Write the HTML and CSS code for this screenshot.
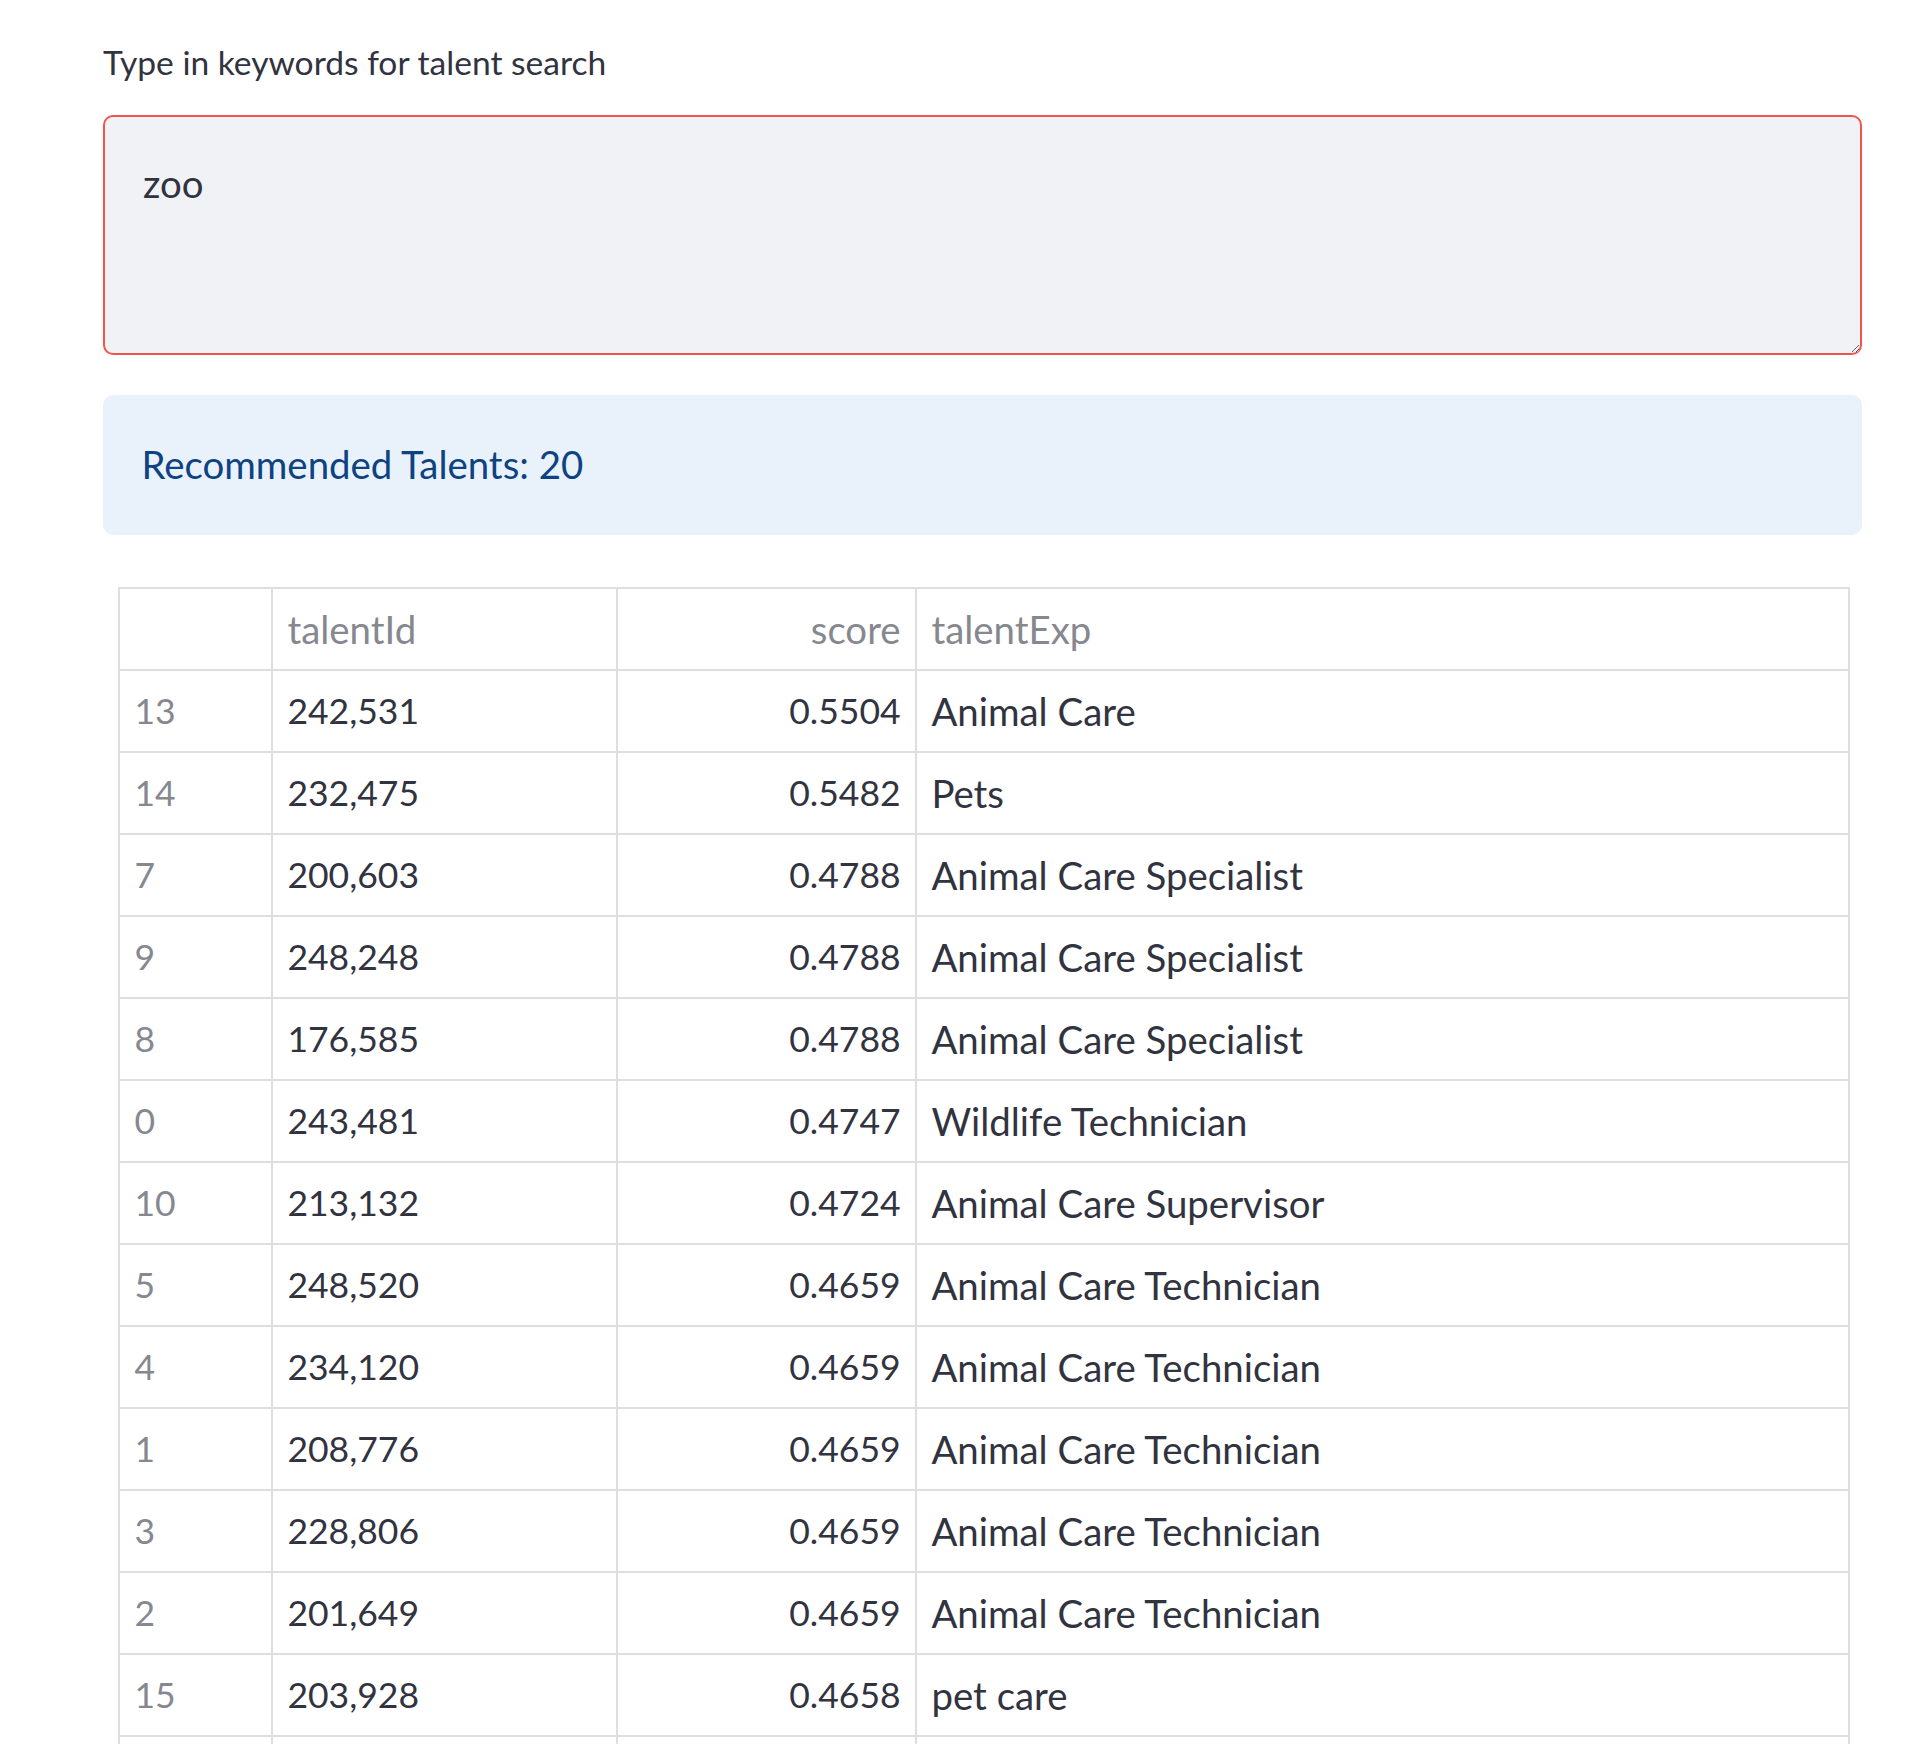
FILE: index.html
```html
<!DOCTYPE html>
<html lang="en">
<head>
<meta charset="utf-8">
<title>Talent search</title>
<link rel="stylesheet" href="styles.css">
</head>
<body>
<main class="main">
  <label class="field-label" for="kw">Type in keywords for talent search</label>
  <textarea id="kw" class="kw-input">zoo</textarea>
  <div class="info-box">Recommended Talents: 20</div>
  <div class="table-wrap">
    <table class="results">
      <colgroup>
        <col class="c-idx"><col class="c-id"><col class="c-score"><col class="c-exp">
      </colgroup>
      <thead>
        <tr><th></th><th class="left">talentId</th><th class="right">score</th><th class="left">talentExp</th></tr>
      </thead>
      <tbody>
        <tr><th class="num">13</th><td class="num">242,531</td><td class="num right">0.5504</td><td>Animal Care</td></tr>
        <tr><th class="num">14</th><td class="num">232,475</td><td class="num right">0.5482</td><td>Pets</td></tr>
        <tr><th class="num">7</th><td class="num">200,603</td><td class="num right">0.4788</td><td>Animal Care Specialist</td></tr>
        <tr><th class="num">9</th><td class="num">248,248</td><td class="num right">0.4788</td><td>Animal Care Specialist</td></tr>
        <tr><th class="num">8</th><td class="num">176,585</td><td class="num right">0.4788</td><td>Animal Care Specialist</td></tr>
        <tr><th class="num">0</th><td class="num">243,481</td><td class="num right">0.4747</td><td>Wildlife Technician</td></tr>
        <tr><th class="num">10</th><td class="num">213,132</td><td class="num right">0.4724</td><td>Animal Care Supervisor</td></tr>
        <tr><th class="num">5</th><td class="num">248,520</td><td class="num right">0.4659</td><td>Animal Care Technician</td></tr>
        <tr><th class="num">4</th><td class="num">234,120</td><td class="num right">0.4659</td><td>Animal Care Technician</td></tr>
        <tr><th class="num">1</th><td class="num">208,776</td><td class="num right">0.4659</td><td>Animal Care Technician</td></tr>
        <tr><th class="num">3</th><td class="num">228,806</td><td class="num right">0.4659</td><td>Animal Care Technician</td></tr>
        <tr><th class="num">2</th><td class="num">201,649</td><td class="num right">0.4659</td><td>Animal Care Technician</td></tr>
        <tr><th class="num">15</th><td class="num">203,928</td><td class="num right">0.4658</td><td>pet care</td></tr>
        <tr class="cut"><th></th><td></td><td></td><td></td></tr>
      </tbody>
    </table>
  </div>
</main>
</body>
</html>
```
FILE: styles.css
```css
html, body {
  margin: 0;
  padding: 0;
  background: #ffffff;
}

body {
  font-family: Lato, "Open Sans", "Liberation Sans", sans-serif;
  color: #31333f;
}

.main {
  display: flex;
  flex-direction: column;
  width: 1759px;
  padding: 36px 0 0 103px;
}

.field-label {
  display: block;
  font-size: 33.6px;
  line-height: 53.76px;
  margin-bottom: 25px;
  color: #31333f;
}

.kw-input {
  box-sizing: border-box;
  display: block;
  width: 1759px;
  height: 240px;
  margin: 0;
  padding: 36px 38px 32px;
  border: 2px solid #f0544d;
  border-radius: 10px;
  background: #f0f2f6;
  font-family: Lato, "Open Sans", sans-serif;
  font-size: 38.4px;
  line-height: 61.44px;
  color: #31333f;
  outline: none;
  resize: vertical;
}

.info-box {
  box-sizing: border-box;
  display: flex;
  align-items: center;
  height: 140px;
  margin-top: 40px;
  padding: 0 38.4px;
  border-radius: 10px;
  background: #e9f1fb;
  color: #0e4383;
  font-size: 38.4px;
  line-height: 61.44px;
}

.table-wrap {
  margin-top: 52px;
  padding: 0 14px 0 15px;
}

.results {
  table-layout: fixed;
  width: 1730px;
  border-collapse: collapse;
  font-size: 38.4px;
  line-height: 60px;
}

.c-idx { width: 153px; }
.c-id { width: 345px; }
.c-score { width: 299px; }
.c-exp { width: 933px; }

.results th,
.results td {
  border: 2px solid #dedee2;
  padding: 10px 14.4px;
  text-align: left;
  font-weight: 400;
  white-space: nowrap;
}

.results th {
  color: #868890;
}

.results td {
  color: #31333f;
}

.results .num {
  font-size: 35.5px;
  font-variant-numeric: tabular-nums;
}

.results .right {
  text-align: right;
}

.results .cut th,
.results .cut td {
  height: 60px;
}
```
